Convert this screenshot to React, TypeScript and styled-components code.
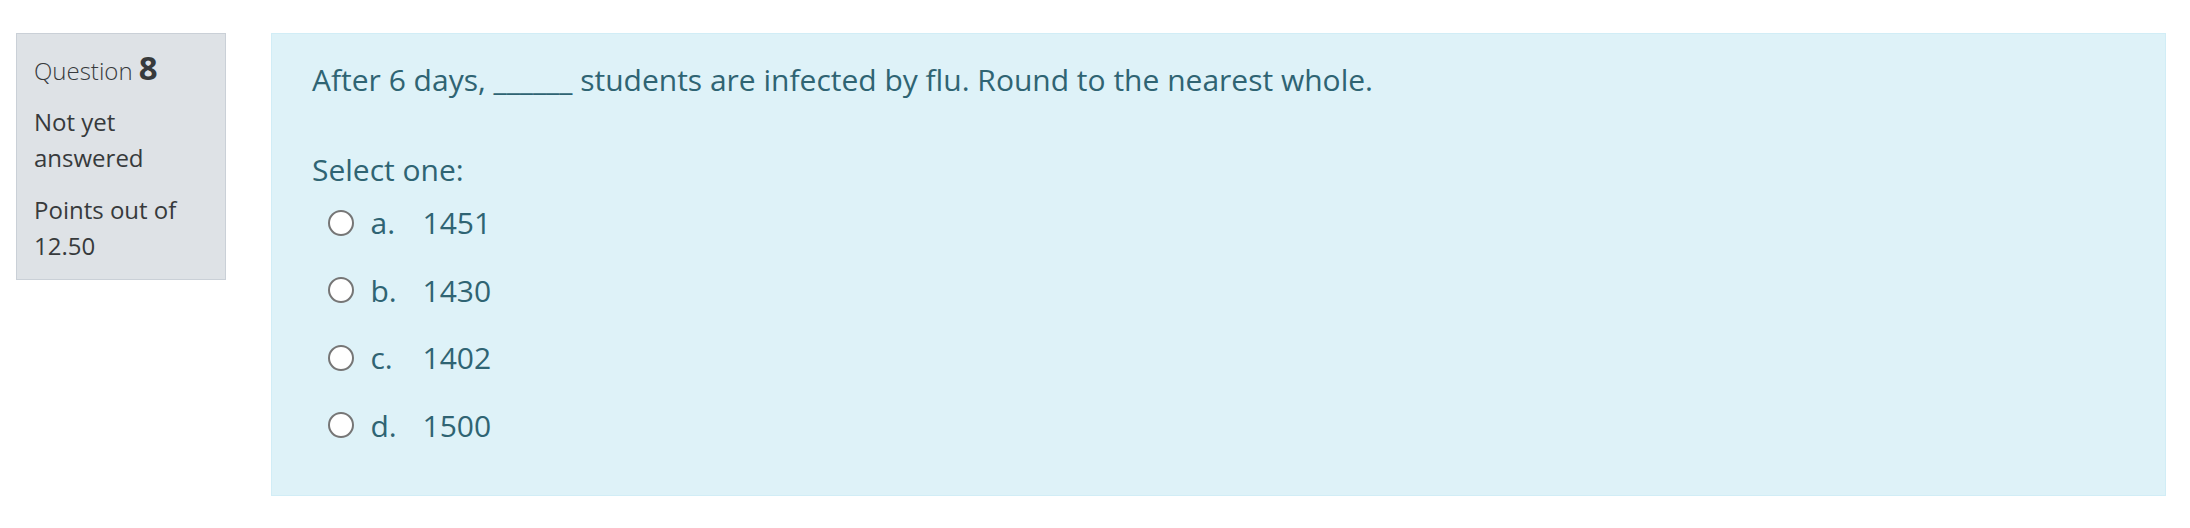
import styled, { createGlobalStyle } from "styled-components";

const GlobalStyle = createGlobalStyle`
  html, body {
    margin: 0;
    padding: 0;
    background: #ffffff;
  }
  body {
    font-family: "Open Sans", "Liberation Sans", sans-serif;
  }
`;

const Page = styled.div`
  display: flex;
  align-items: flex-start;
  gap: 45px;
  padding: 33px 24px 0 16px;
`;

const Info = styled.div`
  flex: 0 0 210px;
  box-sizing: border-box;
  padding: 17px 17px 15px;
  background-color: #dee2e6;
  border: 1px solid #cad0d7;
  color: #373a3c;
`;

const QuestionNo = styled.h3`
  margin: 0 0 13px;
  font-size: 24px;
  font-weight: 300;
  line-height: 40px;
`;

const QuestionNumber = styled.span`
  font-size: 33px;
  font-weight: 700;
  line-height: 1;
`;

const InfoLine = styled.div<{ $last?: boolean }>`
  font-size: 24px;
  line-height: 36px;
  margin-bottom: ${(p) => (p.$last ? "0" : "16px")};
`;

const Formulation = styled.div`
  flex: 1;
  box-sizing: border-box;
  padding: 23px 40px 47px;
  background-color: #def2f8;
  border: 1px solid #d1edf6;
  color: #2f6473;
  font-size: 30px;
  line-height: 45px;
`;

const QText = styled.div`
  margin-bottom: 45px;
`;

const Prompt = styled.div``;

const Answers = styled.div`
  display: flex;
  flex-direction: column;
  gap: 22.5px;
  margin-top: 8px;
`;

const Choice = styled.label`
  display: flex;
  align-items: center;
  padding-left: 16px;
`;

const Radio = styled.input`
  appearance: none;
  width: 26px;
  height: 26px;
  margin: 0 16.5px 0 0;
  box-sizing: border-box;
  border: 2px solid #767676;
  border-radius: 50%;
  background: #ffffff;
  flex-shrink: 0;
`;

const AnswerNumber = styled.span`
  width: 52px;
  flex-shrink: 0;
`;

const AnswerText = styled.div`
  flex: 1;
`;

const choices = [
  { key: "a.", value: "1451" },
  { key: "b.", value: "1430" },
  { key: "c.", value: "1402" },
  { key: "d.", value: "1500" },
];

const App = () => {
  return (
    <>
      <GlobalStyle />
      <Page>
        <Info>
          <QuestionNo>
            Question <QuestionNumber>8</QuestionNumber>
          </QuestionNo>
          <InfoLine>Not yet answered</InfoLine>
          <InfoLine $last>Points out of 12.50</InfoLine>
        </Info>
        <Formulation>
          <QText>
            After 6 days, ______ students are infected by flu. Round to the
            nearest whole.
          </QText>
          <Prompt>Select one:</Prompt>
          <Answers>
            {choices.map((c) => (
              <Choice key={c.key}>
                <Radio type="radio" name="q8" />
                <AnswerNumber>{c.key}</AnswerNumber>
                <AnswerText>{c.value}</AnswerText>
              </Choice>
            ))}
          </Answers>
        </Formulation>
      </Page>
    </>
  );
};

export default App;
